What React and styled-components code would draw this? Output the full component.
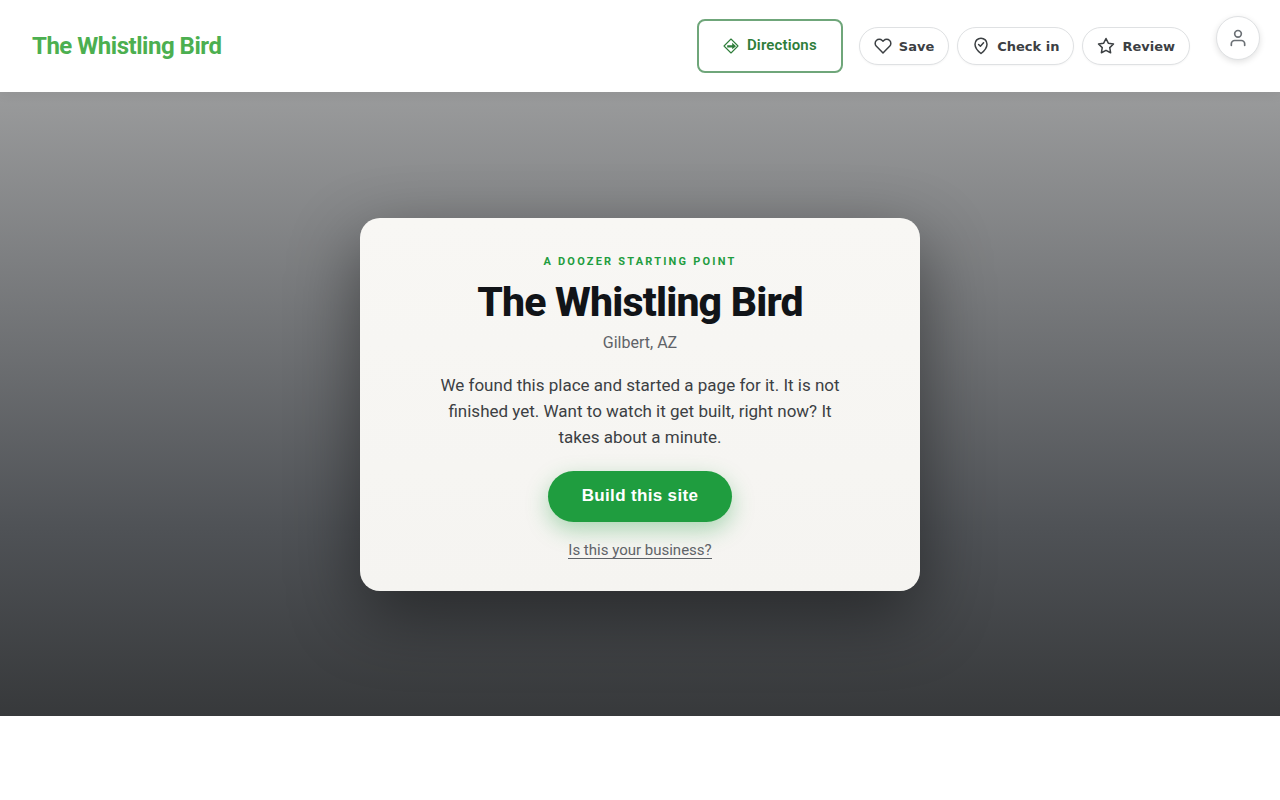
import React from "react";
import styled, { createGlobalStyle } from "styled-components";

const GlobalStyle = createGlobalStyle`
  * {
    box-sizing: border-box;
  }
  body {
    margin: 0;
    background: #fff;
    font-family: Roboto, "Liberation Sans", sans-serif;
  }
`;

const Header = styled.header`
  position: relative;
  z-index: 1;
  display: flex;
  align-items: center;
  justify-content: space-between;
  height: 92px;
  padding: 0 20px 0 32px;
  background: #fff;
  box-shadow: 0 2px 12px rgba(0, 0, 0, 0.06);
`;

const Brand = styled.a`
  color: #4caf50;
  font-size: 24px;
  font-weight: 700;
  letter-spacing: -0.02em;
  text-decoration: none;
`;

const Nav = styled.nav`
  display: flex;
  align-items: center;
`;

const Directions = styled.a`
  display: flex;
  align-items: center;
  gap: 8px;
  height: 54px;
  margin-right: 16px;
  padding: 0 24px;
  border: 2px solid #6fa67a;
  border-radius: 8px;
  color: #2e7d3a;
  font-size: 15px;
  font-weight: 600;
  letter-spacing: 0.01em;
  line-height: 24px;
  text-decoration: none;
`;

const DirectionsLabel = styled.span`
  padding-bottom: 2px;
`;

const Actions = styled.div`
  display: flex;
  gap: 8px;
  margin-right: 26px;
`;

const ActionButton = styled.button`
  display: flex;
  align-items: center;
  gap: 7px;
  height: 38px;
  padding: 0 14px;
  border: 1px solid #dfe1e3;
  border-radius: 19px;
  background: #fff;
  box-shadow: 0 1px 2px rgba(0, 0, 0, 0.04);
  color: #3c4043;
  font-family: "DejaVu Sans", sans-serif;
  font-size: 13px;
  font-weight: 600;
  cursor: pointer;
`;

const Profile = styled.button`
  display: flex;
  align-items: center;
  justify-content: center;
  align-self: flex-start;
  width: 44px;
  height: 44px;
  margin-bottom: 16px;
  padding: 0;
  border: 1px solid #dfe1e3;
  border-radius: 50%;
  background: #fff;
  box-shadow: 0 2px 6px rgba(0, 0, 0, 0.12);
  color: #6b7075;
  cursor: pointer;
`;

const Hero = styled.main`
  display: flex;
  align-items: center;
  justify-content: center;
  min-height: 78vh;
  padding: 48px 24px;
  background: linear-gradient(180deg, #9a9b9c 0%, #4f5256 70%, #37393b 100%);
`;

const Card = styled.section`
  display: flex;
  flex-direction: column;
  align-items: center;
  width: 100%;
  max-width: 560px;
  padding: 36px 40px 32px;
  border-radius: 20px;
  background: linear-gradient(180deg, #f8f7f4, #f5f4f1);
  box-shadow: 0 24px 70px rgba(0, 0, 0, 0.45);
  text-align: center;
`;

const Eyebrow = styled.p`
  margin: 0 0 8px;
  color: #1f9d3f;
  font-size: 11px;
  font-weight: 700;
  letter-spacing: 0.2em;
  line-height: 16px;
  text-transform: uppercase;
`;

const Title = styled.h1`
  margin: 0 0 6px;
  color: #111418;
  font-size: 41px;
  font-weight: 800;
  letter-spacing: -0.02em;
  line-height: 48px;
`;

const Place = styled.p`
  margin: 0 0 18px;
  color: #5f6368;
  font-size: 16px;
  line-height: 22px;
`;

const Lead = styled.p`
  max-width: 420px;
  margin: 0 0 21px;
  color: #3c4043;
  font-size: 17px;
  line-height: 26px;
`;

const BuildButton = styled.button`
  height: 51px;
  margin-bottom: 20px;
  padding: 0 34px;
  border: 0;
  border-radius: 26px;
  background: #1f9d3f;
  box-shadow: 0 8px 22px rgba(31, 157, 63, 0.35);
  color: #fff;
  font-family: "Liberation Sans", Arial, sans-serif;
  font-size: 17px;
  font-weight: 700;
  letter-spacing: 0.02em;
  cursor: pointer;
`;

const ClaimLink = styled.a`
  border-bottom: 1px solid #5f6368;
  color: #5f6368;
  font-size: 15px;
  line-height: 16px;
  text-decoration: none;
`;

const Icon = styled.svg`
  flex: none;
  fill: none;
  stroke: currentColor;
  stroke-width: 2;
  stroke-linecap: round;
  stroke-linejoin: round;
`;

const DirectionsIcon = () => (
  <svg width="16" height="16" viewBox="0 0 16 16" fill="none" stroke="currentColor" aria-hidden="true">
    <path d="M8 1 15 8 8 15 1 8Z" strokeWidth="1.1" strokeLinejoin="round" />
    <path d="M4.200 9.600V7.200h5V4.800L13 8.200 9.200 11.200V9.600Z" fill="currentColor" stroke="none" />
  </svg>
);

const HeartIcon = () => (
  <Icon width="18" height="18" viewBox="0 0 24 24" aria-hidden="true">
    <path d="M20.840 4.610a5.500 5.500 0 0 0-7.780 0L12 5.670l-1.060-1.060a5.500 5.500 0 0 0-7.780 7.780l1.060 1.060L12 21.230l7.780-7.780 1.060-1.060a5.500 5.500 0 0 0 0-7.780z" />
  </Icon>
);

const CheckPinIcon = () => (
  <Icon width="18" height="18" viewBox="0 0 24 24" aria-hidden="true">
    <path d="M12 22s8-6.500 8-12.500a8 8 0 0 0-16 0C4 15.500 12 22 12 22Z" />
    <path d="m8.800 10 2.400 2.400 4.200-4.600" />
  </Icon>
);

const StarIcon = () => (
  <Icon width="18" height="18" viewBox="0 0 24 24" aria-hidden="true">
    <path d="M12 2l3.090 6.260L22 9.270l-5 4.870 1.180 6.880L12 17.770l-6.180 3.250L7 14.140 2 9.270l6.910-1.010L12 2z" />
  </Icon>
);

const UserIcon = () => (
  <Icon width="20" height="20" viewBox="0 0 24 24" aria-hidden="true">
    <circle cx="12" cy="7" r="4" />
    <path d="M20 21v-2a4 4 0 0 0-4-4H8a4 4 0 0 0-4 4v2" />
  </Icon>
);

const actions = [
  { label: "Save", icon: <HeartIcon /> },
  { label: "Check in", icon: <CheckPinIcon /> },
  { label: "Review", icon: <StarIcon /> },
];

function App() {
  return (
    <>
      <GlobalStyle />
      <Header>
        <Brand href="#">The Whistling Bird</Brand>
        <Nav>
          <Directions href="#directions">
            <DirectionsIcon />
            <DirectionsLabel>Directions</DirectionsLabel>
          </Directions>
          <Actions>
            {actions.map((action) => (
              <ActionButton key={action.label} type="button">
                {action.icon}
                {action.label}
              </ActionButton>
            ))}
          </Actions>
          <Profile type="button" aria-label="Account">
            <UserIcon />
          </Profile>
        </Nav>
      </Header>
      <Hero>
        <Card>
          <Eyebrow>A Doozer starting point</Eyebrow>
          <Title>The Whistling Bird</Title>
          <Place>Gilbert, AZ</Place>
          <Lead>
            We found this place and started a page for it. It is not finished yet. Want to watch it
            get built, right now? It takes about a minute.
          </Lead>
          <BuildButton type="button">Build this site</BuildButton>
          <ClaimLink href="#claim">Is this your business?</ClaimLink>
        </Card>
      </Hero>
    </>
  );
}

export default App;
